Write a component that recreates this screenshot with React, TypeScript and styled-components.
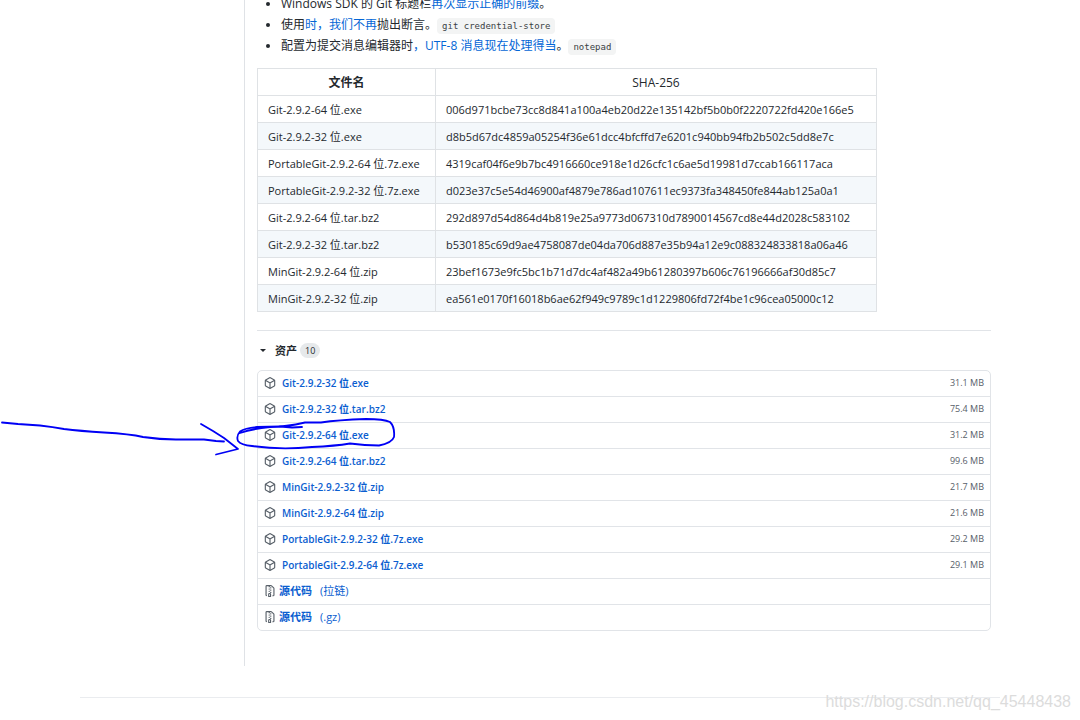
import React from "react";
import styled, { createGlobalStyle, css } from "styled-components";

const GlobalStyle = createGlobalStyle`
  *, *::before, *::after { box-sizing: border-box; }
  body {
    margin: 0;
    background: #fff;
    color: #24292e;
    font-family: "Open Sans", "Noto Sans CJK SC", sans-serif;
    font-size: 11px;
    line-height: 18px;
    overflow-x: hidden;
  }
`;

const Page = styled.div`
  position: relative;
  padding: 0 80px;
`;

const Release = styled.div`
  display: flex;
`;

const Sidebar = styled.aside`
  flex: 0 0 164px;
`;

const Content = styled.main`
  flex: 1;
  min-width: 0;
  border-left: 1px solid #dfe2e6;
  padding: 0 9px 35px 12px;
`;

const Notes = styled.ul`
  margin: -5px 0 13px;
  padding: 0 0 0 24px;
  font-size: 12px;
`;

const Note = styled.li`
  & + & { margin-top: 3px; }
`;

const Link = styled.a`
  color: #0366d6;
  text-decoration: none;
`;

const Code = styled.code`
  padding: 3px 5px;
  border-radius: 4px;
  background: #f3f4f4;
  color: #3a3f44;
  font: 9px/10px "DejaVu Sans Mono", "Liberation Mono", monospace;
`;

const Checksums = styled.table`
  width: 620px;
  max-width: 100%;
  table-layout: fixed;
  border-collapse: collapse;

  tbody tr:nth-child(even) { background: #f4f8fb; }
`;

const cell = css`
  height: 27px;
  padding: 2px 10px 0;
  border: 1px solid #dfe2e5;
  white-space: nowrap;
`;

const HeadCell = styled.th<{ $width?: string; $weight: number }>`
  ${cell}
  width: ${(p) => p.$width ?? "auto"};
  font-size: 12px;
  font-weight: ${(p) => p.$weight};
`;

const Cell = styled.td`
  ${cell}
`;

const Assets = styled.details`
  margin-top: 18px;
  border-top: 1px solid #e1e4e8;
`;

const AssetsTitle = styled.summary`
  display: flex;
  align-items: center;
  height: 39px;
  padding-left: 3px;
  font-weight: 600;
  list-style: none;
  cursor: pointer;

  &::-webkit-details-marker { display: none; }
`;

const Caret = styled.span`
  margin-right: 9px;
  border: 3px solid transparent;
  border-top-color: currentColor;
  border-bottom: 0;
`;

const Counter = styled.span`
  margin-left: 3px;
  padding: 0 5px;
  border-radius: 8px;
  background: #e6e9eb;
  font-size: 9px;
  line-height: 15px;
  font-weight: 400;
`;

const AssetList = styled.ul`
  margin: 0;
  padding: 0;
  border: 1px solid #e1e4e8;
  border-radius: 5px;
  list-style: none;
`;

const AssetRow = styled.li`
  display: flex;
  align-items: center;
  height: 26px;
  padding: 0 6px 1px;

  & + & { border-top: 1px solid #e1e4e8; }
  &:first-child { height: 25px; }
`;

const AssetLink = styled(Link)<{ $source?: boolean }>`
  display: flex;
  align-items: center;
  gap: ${(p) => (p.$source ? 3 : 6)}px;
  font-size: ${(p) => (p.$source ? 11 : 10)}px;
  font-weight: 600;
  color: #0b5ed0;

  svg { color: #586069; }
`;

const Kind = styled.span`
  margin-left: 5px;
  font-weight: 400;
`;

const Size = styled.small`
  margin-left: auto;
  color: #586069;
  font-size: 9px;
`;

const Footer = styled.footer`
  height: 23px;
  margin-top: 31px;
  border-top: 1px solid #eaecef;
`;

const Scribble = styled.svg`
  position: absolute;
  left: 0;
  top: 410px;
  pointer-events: none;
`;

const Watermark = styled.span`
  position: absolute;
  right: 9px;
  bottom: 9px;
  color: #dcdcdc;
  font-family: "Liberation Sans", sans-serif;
  font-size: 16px;
`;

const PackageIcon = () => (
  <svg width="12" height="12" viewBox="0 0 16 16" fill="currentColor" aria-hidden="true">
    <path fillRule="evenodd" d="M8.878.392a1.75 1.75 0 00-1.756 0l-5.25 3.045A1.75 1.75 0 001 4.951v6.098c0 .624.332 1.2.872 1.514l5.25 3.045a1.75 1.75 0 001.756 0l5.25-3.045c.54-.313.872-.89.872-1.514V4.951c0-.624-.332-1.2-.872-1.514L8.878.392zM7.875 1.69a.25.25 0 01.25 0l4.63 2.685L8 7.133 3.245 4.375l4.63-2.685zM2.5 5.677v5.372c0 .09.047.171.125.216l4.625 2.683V8.432L2.5 5.677zm6.25 8.271l4.625-2.683a.25.25 0 00.125-.216V5.677L8.75 8.432v5.516z" />
  </svg>
);

const ZipIcon = () => (
  <svg width="12" height="12" viewBox="0 0 16 16" fill="currentColor" aria-hidden="true">
    <path fillRule="evenodd" d="M3.5 1.75a.25.25 0 01.25-.25h3a.75.75 0 000 1.5h.5a.75.75 0 000-1.5h2.086a.25.25 0 01.177.073l2.914 2.914a.25.25 0 01.073.177v8.586a.25.25 0 01-.25.25h-.5a.75.75 0 000 1.5h.5A1.75 1.75 0 0014 13.25V4.664c0-.464-.184-.909-.513-1.237L10.573.513A1.75 1.75 0 009.336 0H3.75A1.75 1.75 0 002 1.75v11.5c0 .649.353 1.214.874 1.515a.75.75 0 10.752-1.298.25.25 0 01-.126-.217V1.75zM8.75 3a.75.75 0 000 1.5h.5a.75.75 0 000-1.5h-.5zM6 5.25a.75.75 0 01.75-.75h.5a.75.75 0 010 1.5h-.5A.75.75 0 016 5.25zm2 1.5A.75.75 0 018.75 6h.5a.75.75 0 010 1.5h-.5A.75.75 0 018 6.75zm-1.25.75a.75.75 0 000 1.5h.5a.75.75 0 000-1.5h-.5zM8 9.75A.75.75 0 018.75 9h.5a.75.75 0 010 1.5h-.5A.75.75 0 018 9.75zm-.75.75a1.75 1.75 0 00-1.75 1.75v3c0 .414.336.75.75.75h2.5a.75.75 0 00.75-.75v-3a1.75 1.75 0 00-1.75-1.75h-.5zM7 12.25a.25.25 0 01.25-.25h.5a.25.25 0 01.25.25v2.25H7v-2.25z" />
  </svg>
);

const checksums = [
  ["Git-2.9.2-64 位.exe", "006d971bcbe73cc8d841a100a4eb20d22e135142bf5b0b0f2220722fd420e166e5"],
  ["Git-2.9.2-32 位.exe", "d8b5d67dc4859a05254f36e61dcc4bfcffd7e6201c940bb94fb2b502c5dd8e7c"],
  ["PortableGit-2.9.2-64 位.7z.exe", "4319caf04f6e9b7bc4916660ce918e1d26cfc1c6ae5d19981d7ccab166117aca"],
  ["PortableGit-2.9.2-32 位.7z.exe", "d023e37c5e54d46900af4879e786ad107611ec9373fa348450fe844ab125a0a1"],
  ["Git-2.9.2-64 位.tar.bz2", "292d897d54d864d4b819e25a9773d067310d7890014567cd8e44d2028c583102"],
  ["Git-2.9.2-32 位.tar.bz2", "b530185c69d9ae4758087de04da706d887e35b94a12e9c088324833818a06a46"],
  ["MinGit-2.9.2-64 位.zip", "23bef1673e9fc5bc1b71d7dc4af482a49b61280397b606c76196666af30d85c7"],
  ["MinGit-2.9.2-32 位.zip", "ea561e0170f16018b6ae62f949c9789c1d1229806fd72f4be1c96cea05000c12"],
];

const assets = [
  ["Git-2.9.2-32 位.exe", "31.1 MB"],
  ["Git-2.9.2-32 位.tar.bz2", "75.4 MB"],
  ["Git-2.9.2-64 位.exe", "31.2 MB"],
  ["Git-2.9.2-64 位.tar.bz2", "99.6 MB"],
  ["MinGit-2.9.2-32 位.zip", "21.7 MB"],
  ["MinGit-2.9.2-64 位.zip", "21.6 MB"],
  ["PortableGit-2.9.2-32 位.7z.exe", "29.2 MB"],
  ["PortableGit-2.9.2-64 位.7z.exe", "29.1 MB"],
];

const sources = ["(拉链)", "(.gz)"];

export default function App() {
  return (
    <Page>
      <GlobalStyle />
      <Release>
        <Sidebar />
        <Content>
          <Notes>
            <Note>Windows SDK 的 Git 标题栏<Link href="#">再次显示正确的前缀</Link>。</Note>
            <Note>使用<Link href="#">时，我们不再</Link>抛出断言。<Code>git credential-store</Code></Note>
            <Note>配置为提交消息编辑器时<Link href="#">，UTF-8 消息现在处理得当</Link>。<Code>notepad</Code></Note>
          </Notes>
          <Checksums>
            <thead>
              <tr>
                <HeadCell $width="178px" $weight={700}>文件名</HeadCell>
                <HeadCell $weight={400}>SHA-256</HeadCell>
              </tr>
            </thead>
            <tbody>
              {checksums.map(([name, hash]) => (
                <tr key={name}>
                  <Cell>{name}</Cell>
                  <Cell>{hash}</Cell>
                </tr>
              ))}
            </tbody>
          </Checksums>
          <Assets open>
            <AssetsTitle><Caret />资产<Counter>10</Counter></AssetsTitle>
            <AssetList>
              {assets.map(([name, size]) => (
                <AssetRow key={name}>
                  <AssetLink href="#"><PackageIcon />{name}</AssetLink>
                  <Size>{size}</Size>
                </AssetRow>
              ))}
              {sources.map((kind) => (
                <AssetRow key={kind}>
                  <AssetLink href="#" $source><ZipIcon />源代码<Kind>{kind}</Kind></AssetLink>
                </AssetRow>
              ))}
            </AssetList>
          </Assets>
        </Content>
      </Release>
      <Footer />
      <Scribble width="400" height="50" viewBox="0 410 400 50" fill="none" stroke="#0000f5" strokeWidth="1.8" strokeLinecap="round" strokeLinejoin="round" aria-hidden="true">
        <path d="M2 422.500L18 424L40 425.500Q53 427 64 429Q80 431 104 432.500Q130 434 143 437Q160 439.500 176 439.500L204 439.500L216 441L224 441.500" />
        <path d="M201 424L213 431L224 438L238 449L216 454.500" />
        <path d="M302 427L292 427.500L280 426.500L257 427Q245 428 240 431.500Q236 436 238 441Q241 445 252 446Q280 450 312 447Q335 446 350 443.500Q365 445.500 379 445.500Q392 443 394 437Q395 427 390 422Q384 419 366 419Q338 420 321 422.500L305 422.500Q286 427 270 427Q252 429 240 433" />
      </Scribble>
      <Watermark>https://blog.csdn.net/qq_45448438</Watermark>
    </Page>
  );
}
